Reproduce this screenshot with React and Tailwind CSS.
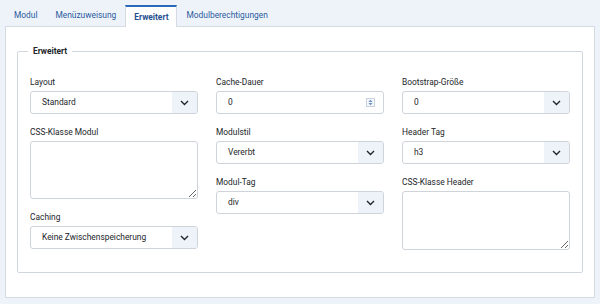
import React from 'react';

const font = { fontFamily: 'Roboto, "Noto Sans", sans-serif' };

const Chevron = () => (
  <svg width="9" height="6" viewBox="0 0 9 6" fill="none">
    <path d="M1 1l3.5 3.5L8 1" stroke="#22262a" strokeWidth="1.4" />
  </svg>
);

const Spinner = () => (
  <svg width="9" height="9" viewBox="0 0 9 9">
    <rect x="0.5" y="0.5" width="8" height="8" fill="#f3f6fa" stroke="#c9d2de" />
    <path d="M2.5 4L4.5 1.8 6.5 4z" fill="#6d8fc2" />
    <path d="M2.5 5L4.5 7.2 6.5 5z" fill="#6d8fc2" />
  </svg>
);

const Label = ({ children }) => (
  <div className="text-[8.4px] leading-[16px] text-[#22262a] mb-[1px]">{children}</div>
);

const Select = ({ value }) => (
  <div className="h-[23px] flex border border-[#ced4da] rounded-[3px] bg-white overflow-hidden">
    <div className="flex-1 pl-[11px] flex items-center text-[8.4px] text-[#22262a]">{value}</div>
    <div className="w-[25px] bg-[#eef3fa] flex items-center justify-center">
      <Chevron />
    </div>
  </div>
);

const NumberInput = ({ value }) => (
  <div className="h-[23px] flex items-center border border-[#ced4da] rounded-[3px] bg-white pl-[11px] pr-[8px]">
    <div className="flex-1 text-[8.4px] text-[#22262a]">{value}</div>
    <Spinner />
  </div>
);

const Textarea = ({ h }) => (
  <textarea className={`block w-full border border-[#ced4da] rounded-[3px] bg-white ${h}`} />
);

const Field = ({ label, children }) => (
  <div>
    <Label>{label}</Label>
    {children}
  </div>
);

const tabs = ['Modul', 'Menüzuweisung', 'Erweitert', 'Modulberechtigungen'];

export default function App() {
  return (
    <div className="w-[600px] h-[304px] bg-[#eef3fa] overflow-hidden" style={font}>
      <div className="flex items-end h-[26px] pl-[5px]">
        {tabs.map((t) =>
          t === 'Erweitert' ? (
            <div
              key={t}
              className="relative h-[22px] mb-[-1px] px-2 flex items-center bg-white border-x border-[#d5dbe3] border-t-2 border-t-[#2a69b8] text-[8.4px] font-bold text-[#1f4f8f]"
            >
              {t}
            </div>
          ) : (
            <div key={t} className="h-[21px] px-2 border-x border-transparent flex items-center text-[8.4px] text-[#2a5a9c]">
              {t}
            </div>
          )
        )}
      </div>
      <div className="mx-[5px] bg-white border border-[#d5dbe3] pt-[18px] px-[11px] pb-[24px]">
        <fieldset className="border border-[#d0d6dd] rounded-[2px] px-3 pt-[17px] pb-[22px]">
          <legend className="ml-[-2px] px-[5px] text-[8.4px] leading-[12px] font-bold text-[#22262a]">Erweitert</legend>
          <div className="grid grid-cols-3 gap-x-[18px]">
            <div className="flex flex-col gap-[10px]">
              <Field label="Layout"><Select value="Standard" /></Field>
              <Field label="CSS-Klasse Modul"><Textarea h="h-[58px]" /></Field>
              <Field label="Caching"><Select value="Keine Zwischenspeicherung" /></Field>
            </div>
            <div className="flex flex-col gap-[10px]">
              <Field label="Cache-Dauer"><NumberInput value="0" /></Field>
              <Field label="Modulstil"><Select value="Vererbt" /></Field>
              <Field label="Modul-Tag"><Select value="div" /></Field>
            </div>
            <div className="flex flex-col gap-[10px]">
              <Field label="Bootstrap-Größe"><Select value="0" /></Field>
              <Field label="Header Tag"><Select value="h3" /></Field>
              <Field label="CSS-Klasse Header"><Textarea h="h-[59px]" /></Field>
            </div>
          </div>
        </fieldset>
      </div>
    </div>
  );
}
